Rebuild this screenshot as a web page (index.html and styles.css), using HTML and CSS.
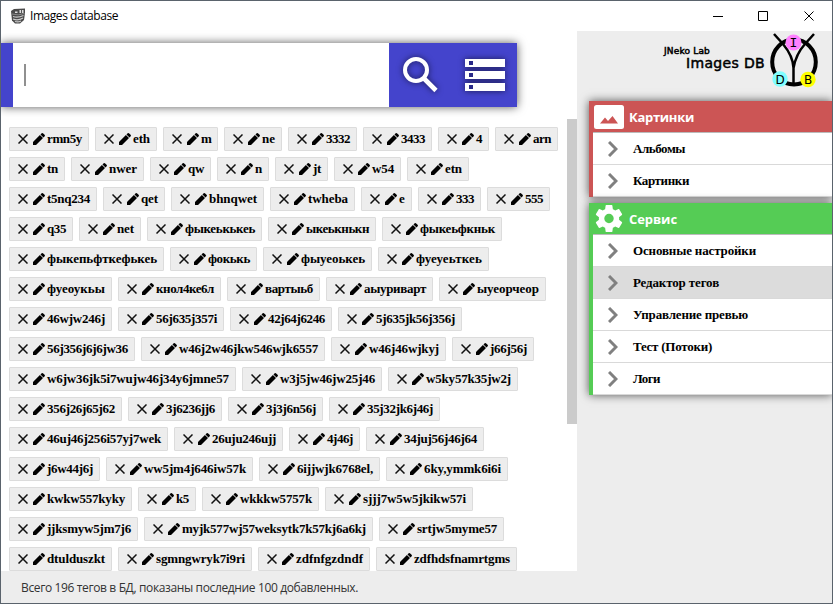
FILE: index.html
```html
<!DOCTYPE html>
<html lang="ru">
<head>
<meta charset="utf-8">
<title>Images database</title>
<link rel="stylesheet" href="styles.css">
</head>
<body>
<svg class="defs" aria-hidden="true">
  <symbol id="remove" viewBox="0 0 10 10"><path d="M.5.5 9.500 9.500M9.500.5.5 9.500" stroke="#111" stroke-width="1.500" fill="none"/></symbol>
  <symbol id="pencil" viewBox="0 0 12 12"><path d="M0 12V9L6.900 2 10 5 3 12ZM7.500 1.500 8.700.3Q9.500-.3 10.200.4L11.600 1.800Q12.300 2.500 11.700 3.200L10.500 4.500Z"/></symbol>
  <symbol id="chevron" viewBox="0 0 10 16"><path d="m1 1 7 7-7 7" stroke="#808080" stroke-width="3" fill="none"/></symbol>
</svg>
<div class="window">
  <header class="titlebar">
    <svg class="appicon" viewBox="0 0 16 16">
      <path d="M1 3 4 1 15 .5 15 5 14 12 10 15.500 5 15.500 2 12.500Z" fill="#4a4a4a"/>
      <path d="M3 8.500Q8 10 13.500 7.500M3 11Q8 13 13 10M5 13.500Q8 14.500 11 13" stroke="#ccc" stroke-width="1.200" fill="none"/>
      <path d="M9.500 2h4v3h-4ZM5 3.500h2.500v1.500H5Z" fill="#ddd"/><path d="M2 6Q8 8 14.500 5.500" stroke="#888" fill="none"/><path d="M11.500 2v3" stroke="#555"/>
    </svg>
    <span class="title"><span data-w="88">Images database</span></span>
    <svg class="controls" viewBox="0 0 102 12" fill="none" stroke="#000"><path d="M0 6.500h10M45.500 1.500h9v9h-9ZM91.500 1.500l9 9M100.500 1.500l-9 9"/></svg>
  </header>
  <div class="main">
    <section class="content">
      <div class="search">
        <div class="field"><span class="caret"></span></div>
        <div class="actions">
          <svg class="glass" viewBox="0 0 36 36" fill="none" stroke="#fff"><circle cx="13" cy="13" r="11" stroke-width="4"/><path d="M21 21.500 33 33.500" stroke-width="4.600"/></svg>
          <svg class="list" viewBox="0 0 40 32"><path d="M0 0h40v8H0ZM0 12h40v8H0ZM0 24h40v8H0Z" fill="#fff"/><path d="M4 2h4v4H4ZM4 14h4v4H4ZM4 26h4v4H4Z" fill="#282888"/></svg>
        </div>
      </div>
      <div class="scroller">
        <div class="tags" id="tags"></div>
        <div class="track"><div class="thumb"></div></div>
      </div>
    </section>
    <aside class="side">
      <div class="brand">
        <div class="names"><span class="lab"><span data-w="46">JNeko Lab</span></span><span class="db"><span data-w="79">Images DB</span></span></div>
        <svg class="logo" viewBox="0 0 50 56">
          <ellipse cx="25" cy="30" rx="21.800" ry="22.500" fill="none" stroke="#000" stroke-width="4"/>
          <path d="M5 2 14 12Q24 24 24.500 36V53M45 2 36 12Q27 22 24.500 36" stroke="#000" stroke-width="2.500" fill="none"/>
          <circle cx="24.500" cy="10.500" r="8" fill="#ff80ff"/><circle cx="11" cy="47" r="7.700" fill="#80ffff"/><circle cx="39" cy="47.500" r="7.700" fill="#ff0"/>
          <text class="mono" x="24.500" y="15" text-anchor="middle">I</text><text x="11" y="51.500" text-anchor="middle">D</text><text x="39" y="52" text-anchor="middle">B</text>
        </svg>
      </div>
      <nav class="menu red">
        <h2><svg class="mi" viewBox="0 0 30 24"><rect width="30" height="24" rx="2.500" fill="#fff"/><path d="M6 18.500 11 12.500 14 16 18.500 11 24 18.500Z" fill="#cc5555"/></svg><span data-w="65">Картинки</span></h2>
        <a><svg><use href="#chevron"/></svg><span data-w="52">Альбомы</span></a>
        <a><svg><use href="#chevron"/></svg><span data-w="56">Картинки</span></a>
      </nav>
      <nav class="menu green">
        <h2><svg class="mi gear" viewBox="2 2 20 20"><path fill="#fff" d="M19.430 12.980c.04-.32.07-.64.07-.98s-.03-.66-.07-.98l2.110-1.650c.19-.15.24-.42.12-.64l-2-3.460c-.12-.22-.39-.3-.61-.22l-2.490 1c-.52-.4-1.080-.73-1.690-.98l-.38-2.650C14.460 2.180 14.250 2 14 2h-4c-.25 0-.46.18-.49.42l-.38 2.650c-.61.25-1.170.59-1.690.98l-2.490-1c-.23-.09-.49 0-.61.22l-2 3.460c-.13.22-.07.49.12.64l2.110 1.650c-.04.32-.07.65-.07.98s.03.66.07.98l-2.110 1.650c-.19.15-.24.42-.12.64l2 3.460c.12.22.39.3.61.22l2.490-1c.52.4 1.080.73 1.690.98l.38 2.650c.03.24.24.42.49.42h4c.25 0 .46-.18.49-.42l.38-2.650c.61-.25 1.170-.59 1.690-.98l2.490 1c.23.09.49 0 .61-.22l2-3.460c.12-.22.07-.49-.12-.64zM12 15.500A3.500 3.500 0 1 1 12 8.500a3.500 3.500 0 0 1 0 7z"/></svg><span data-w="48">Сервис</span></h2>
        <a><svg><use href="#chevron"/></svg><span data-w="123">Основные настройки</span></a>
        <a class="active"><svg><use href="#chevron"/></svg><span data-w="86">Редактор тегов</span></a>
        <a><svg><use href="#chevron"/></svg><span data-w="115">Управление превью</span></a>
        <a><svg><use href="#chevron"/></svg><span data-w="79">Тест (Потоки)</span></a>
        <a><svg><use href="#chevron"/></svg><span data-w="27">Логи</span></a>
      </nav>
    </aside>
  </div>
  <footer class="status"><span data-w="337">Всего 196 тегов в БД, показаны последние 100 добавленных.</span></footer>
</div>
<script src="tags.js"></script>
</body>
</html>
```
FILE: styles.css
```css
* { box-sizing: border-box; }
body { margin: 0; font-family: "Open Sans", sans-serif; color: #000; }
.defs { position: absolute; width: 0; height: 0; }
.window { width: 833px; height: 604px; border: 1px solid #5a636c; background: #fff; display: flex; flex-direction: column; overflow: hidden; }
[data-w] { white-space: pre; }
.titlebar { flex: none; height: 30px; display: flex; align-items: center; padding: 0 17px 0 9px; }
.appicon { width: 16px; height: 16px; }
.title { flex: 1; font-size: 12px; margin-left: 4px; line-height: 30px; }
.controls { width: 102px; height: 12px; }
.main { flex: none; height: 540px; display: flex; }
.content { width: 576px; display: flex; flex-direction: column; }
.search { width: 516px; height: 64px; margin-top: 12px; flex: none; display: flex; background: #fff; border-left: 12px solid #4444cc; box-shadow: 0 0 9px rgba(0,0,0,.65); }
.field { flex: 1; padding: 21px 0 0 11px; }
.caret { display: block; width: 2px; height: 22px; background: #909090; }
.actions { width: 128px; background: #4444cc; display: flex; padding: 14px 12px 0 14px; justify-content: space-between; }
.actions svg { filter: drop-shadow(0 0 3px rgba(0,0,0,.6)); }
.glass { width: 36px; height: 36px; }
.list { width: 40px; height: 32px; margin-top: 2px; }
.scroller { margin-top: 12px; height: 452px; display: flex; overflow: hidden; justify-content: space-between; }
.tags { width: 559px; height: 478px; padding: 8px 0 0 8px; display: flex; flex-wrap: wrap; gap: 6px; align-content: flex-start; }
.tag { flex: none; height: 24px; display: flex; align-items: center; border: 1px solid #dcdcdc; border-radius: 1px; background: #ededed; font: bold 13px/22px "Liberation Serif", serif; padding-left: 8px; }
.remove { width: 10px; height: 10px; }
.pencil { width: 12px; height: 12px; margin: 0 2px 0 5px; }
.track { width: 10px; }
.thumb { height: 305px; background: #cbcbcb; }
.side { width: 255px; background: #ededed; overflow: hidden; }
.brand { height: 70px; display: flex; justify-content: flex-end; padding-right: 13px; }
.names { display: flex; flex-direction: column; align-items: flex-start; font-family: "DejaVu Sans", sans-serif; -webkit-text-stroke: .5px #000; width: 105px; padding-top: 14px; }
.lab { font-size: 9px; line-height: 12px; }
.db { font-size: 14px; line-height: 14px; margin: -1px 0 0 22px; }
.logo { width: 50px; height: 56px; margin-top: 1px; font: 12px "DejaVu Sans", sans-serif; }
.mono { font-family: "DejaVu Sans Mono", monospace; font-size: 13px; }
.menu { margin-left: 12px; border-left: 4px solid; box-shadow: 0 0 9px rgba(0,0,0,.65); background: #fff; }
.red { border-color: #cc5555; }
.green { border-color: #55cc55; margin-top: 6px; }
.menu h2 { margin: 0; height: 32px; display: flex; align-items: center; color: #fff; font-size: 13px; line-height: 31px; border-bottom: 1px solid #bbb; padding-left: 1px; }
.menu h2 span { position: relative; top: 1px; }
.red h2 { background: #cc5555; }
.green h2 { background: #55cc55; }
.mi { width: 30px; height: 24px; margin-right: 5px; }
.gear { height: 27px; }
.menu a { height: 32px; display: flex; align-items: center; border-bottom: 1px solid #d9d9d9; font: bold 13px/31px "Liberation Serif", serif; }
.menu a svg { width: 10px; height: 16px; margin: 0 15px 0 15px; }
.menu .active { background: #dcdcdc; }
.status { flex: 1; background: #ededed; padding-left: 20px; font-size: 12px; line-height: 34px; color: #333; }
```
FILE: tags.js
```js
// Each tag: name and chip width
const tags = `rmn5y 80|eth 62|m 55|ne 58|3332 69|3433 69|4 51|arn 63
tn 56|nwer 73|qw 61|n 52|jt 53|w54 67|etn 62
t5nq234 88|qet 62|bhnqwet 93|twheba 85|e 51|333 63|555 63
q35 64|net 62|фыкеькькеь 115|ыкеькнькн 108|фыкеьфкньк 120
фыкепьфткефькеь 155|фокькь 87|фыуеоькеь 109|фуеуеьткеь 111
фуеоукьы 103|кнол4ке6л 103|вартыьб 93|аыуриварт 107|ыуеорчеор 107
46wjw246j 103|56j635j357i 106|42j64j6246 102|5j635jk56j356j 124
56j356j6j6jw36 126|w46j2w46jkw546wjk6557 184|w46j46wjkyj 115|j66j56j 82
w6jw36jk5i7wujw46j34y6jmne57 227|w3j5jw46jw25j46 140|w5ky57k35jw2j 130
356j26j65j62 113|3j6236jj6 94|3j3j6n56j 95|35j32jk6j46j 111
46uj46j256i57yj7wek 159|26uju246ujj 109|4j46j 71|34juj56j46j64 118
j6w44j6j 91|ww5jm4j646iw57k 147|6ijjwjk6768el, 121|6ky,ymmk6i6i 122
kwkw557kyky 123|k5 58|wkkkw5757k 117|sjjj7w5w5jkikw57i 148
jjksmyw5jm7j6 129|myjk577wj57weksytk7k57kj6a6kj 229|srtjw5myme57 125
dtulduszkt 103|sgmngwryk7i9ri 134|zdfnfgzdndf 112|zdfhdsfnamrtgms 141`.split(/[|\n]/);

const list = document.getElementById("tags");
for (const entry of tags) {
  const [name, width] = entry.split(" ");
  const chip = document.createElement("div");
  chip.className = "tag";
  chip.style.width = width + "px";
  chip.innerHTML = `<svg class="remove"><use href="#remove"/></svg><svg class="pencil"><use href="#pencil"/></svg><span data-w="${width - 45}">${name}</span>`;
  list.append(chip);
}

for (const el of document.querySelectorAll("[data-w]")) {
  const natural = el.getBoundingClientRect().width;
  el.style.letterSpacing = (el.dataset.w - natural) / el.textContent.length + "px";
}
```
